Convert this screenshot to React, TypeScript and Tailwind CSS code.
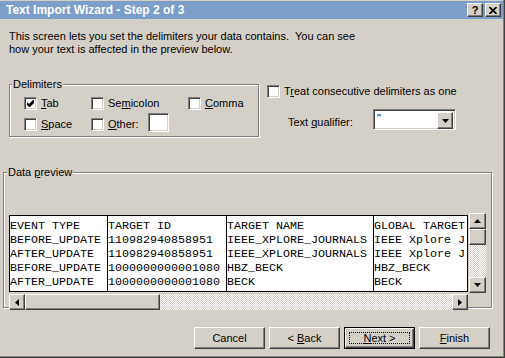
import React from "react";

const ui = "font-['Liberation_Sans',Arial,sans-serif] text-[11px] leading-[13px] text-black";
const raised =
  "border border-t-white border-l-white border-r-[#404040] border-b-[#404040] shadow-[inset_-1px_-1px_0_#808080] bg-[#d4d0c8]";
const sunken =
  "border border-t-[#808080] border-l-[#808080] border-r-white border-b-white shadow-[inset_1px_1px_0_#404040,inset_-1px_-1px_0_#d4d0c8] bg-white";
const etched = "border border-[#808080] shadow-[inset_1px_1px_0_#fff,1px_1px_0_#fff]";
const track =
  "bg-[repeating-conic-gradient(#d4d0c8_0_25%,#ffffff_0_50%)] bg-[length:2px_2px]";

const rows = [
  ["EVENT TYPE", "TARGET ID", "TARGET NAME", "GLOBAL TARGET"],
  ["BEFORE_UPDATE", "110982940858951", "IEEE_XPLORE_JOURNALS", "IEEE Xplore J"],
  ["AFTER_UPDATE", "110982940858951", "IEEE_XPLORE_JOURNALS", "IEEE Xplore J"],
  ["BEFORE_UPDATE", "1000000000001080", "HBZ_BECK", "HBZ_BECK"],
  ["AFTER_UPDATE", "1000000000001080", "BECK", "BECK"],
];

function Check({ checked }: { checked?: boolean }) {
  return (
    <span className={`${sunken} flex h-[13px] w-[13px] shrink-0 items-center justify-center`}>
      {checked && (
        <svg width="7" height="7" viewBox="0 0 7 7">
          <polygon points="0,2 2,4 6,0 7,0 7,3 3,7 2,7 0,5" fill="#000" />
        </svg>
      )}
    </span>
  );
}

function Option({ checked, children }: { checked?: boolean; children: React.ReactNode }) {
  return (
    <div className="flex items-center gap-[4px]">
      <Check checked={checked} />
      <span>{children}</span>
    </div>
  );
}

function Arrow({ dir }: { dir: "up" | "down" | "left" | "right" }) {
  const pts = {
    up: "0,4 7,4 3.5,0",
    down: "0,0 7,0 3.5,4",
    left: "4,0 4,7 0,3.5",
    right: "0,0 0,7 4,3.5",
  }[dir];
  const vertical = dir === "up" || dir === "down";
  return (
    <svg width={vertical ? 7 : 4} height={vertical ? 4 : 7} viewBox={vertical ? "0 0 7 4" : "0 0 4 7"}>
      <polygon points={pts} fill="#000" />
    </svg>
  );
}

function Button({ children, isDefault }: { children: React.ReactNode; isDefault?: boolean }) {
  if (isDefault) {
    return (
      <div className="h-[22px] w-[71px] border border-black">
        <div className={`${raised} flex h-full w-full p-[3px]`}>
          <div className="flex flex-1 items-center justify-center border border-dotted border-black">
            <span className="whitespace-pre">{children}</span>
          </div>
        </div>
      </div>
    );
  }
  return (
    <div className={`${raised} flex h-[22px] w-[71px] items-center justify-center`}>
      <span className="whitespace-pre">{children}</span>
    </div>
  );
}

export default function App() {
  return (
    <div className={`${ui} h-[358px] w-[505px] border-r border-b border-[#404040] bg-[#d4d0c8]`}>
      <div className="flex h-full w-full flex-col border-r border-b border-[#808080] pt-[1px]">
        {/* Title bar */}
        <div className="flex h-[18px] items-center justify-between bg-[#7b9ecb] pl-[6px] pr-[2px]">
          <span className="text-[12px] font-bold text-white">Text Import Wizard - Step 2 of 3</span>
          <div className="flex gap-[2px]">
            <div className={`${raised} flex h-[14px] w-[16px] items-center justify-center text-[11px] font-bold leading-none`}>
              ?
            </div>
            <div className={`${raised} flex h-[14px] w-[16px] items-center justify-center`}>
              <svg width="8" height="7" viewBox="0 0 8 7">
                <path d="M0.5 0 L7.5 7 M7.5 0 L0.5 7" stroke="#000" strokeWidth="1.6" />
              </svg>
            </div>
          </div>
        </div>

        <p className="mt-[11px] whitespace-pre pl-[9px]">
          {"This screen lets you set the delimiters your data contains.  You can see\nhow your text is affected in the preview below."}
        </p>

        {/* Options */}
        <div className="mt-[28px] flex items-start">
          <div className={`${etched} relative ml-[9px] h-[53px] w-[250px] pl-[14px] pt-[8px]`}>
            <span className="absolute -top-[7px] left-[2px] bg-[#d4d0c8] px-[1px]">Delimiters</span>
            <div className="grid grid-cols-[67px_97px_auto]">
              <div className="flex h-[21px] items-center">
                <Option checked>
                  <u>T</u>ab
                </Option>
              </div>
              <div className="flex h-[21px] items-center">
                <Option>
                  Se<u>m</u>icolon
                </Option>
              </div>
              <div className="flex h-[21px] items-center">
                <Option>
                  <u>C</u>omma
                </Option>
              </div>
              <div className="flex h-[21px] items-center">
                <Option>
                  <u>S</u>pace
                </Option>
              </div>
              <div className="col-span-2 flex h-[21px] items-center">
                <Option>
                  <u>O</u>ther:
                </Option>
                <div className={`${sunken} mb-[4px] ml-[9px] h-[19px] w-[21px]`} />
              </div>
            </div>
          </div>

          <div className="ml-[8px] flex flex-col pt-[1px]">
            <div className="flex h-[13px] items-center gap-[4px]">
              <Check />
              <span>
                T<u>r</u>eat consecutive delimiters as one
              </span>
            </div>
            <div className="mt-[11px] flex items-start">
              <span className="ml-[21px] mt-[7px] w-[85px]">
                Text <u>q</u>ualifier:
              </span>
              <div className={`${sunken} flex h-[21px] w-[83px] p-[2px]`}>
                <span className="flex-1 pl-[1px] leading-[12px]">"</span>
                <div className={`${raised} flex h-[17px] w-[16px] items-center justify-center`}>
                  <Arrow dir="down" />
                </div>
              </div>
            </div>
          </div>
        </div>

        {/* Data preview */}
        <div className={`${etched} relative ml-[3px] mt-[35px] h-[136px] w-[489px]`}>
          <span className="absolute -top-[7px] left-[3px] bg-[#d4d0c8] px-[1px]">
            Data <u>p</u>review
          </span>
          <div className="ml-[5px] mt-[40px] flex">
            <div className="flex w-[459px] flex-col">
              <div className="mt-[2px] flex h-[77px] overflow-hidden border border-black bg-white pt-[3px] font-['Liberation_Mono','Courier_New',monospace] text-[11.67px] leading-[14px]">
                {[97, 118, 146, 93].map((w, c) => (
                  <div
                    key={c}
                    className={`-mt-[3px] shrink-0 overflow-hidden whitespace-pre pt-[3px] ${c < 3 ? "border-r border-black" : ""}`}
                    style={{ width: c < 3 ? w + 1 : w }}
                  >
                    {rows.map((r, i) => (
                      <div key={i}>{r[c]}</div>
                    ))}
                  </div>
                ))}
              </div>
              <div className="mt-[2px] flex h-[16px]">
                <div className={`${raised} flex h-[16px] w-[16px] items-center justify-center`}>
                  <Arrow dir="left" />
                </div>
                <div className={`${raised} h-[16px] w-[135px]`} />
                <div className={`${track} flex-1`} />
                <div className={`${raised} flex h-[16px] w-[16px] items-center justify-center`}>
                  <Arrow dir="right" />
                </div>
              </div>
            </div>
            <div className="ml-[1px] flex h-[80px] w-[17px] flex-col">
              <div className={`${raised} flex h-[16px] items-center justify-center`}>
                <Arrow dir="up" />
              </div>
              <div className={`${raised} h-[16px]`} />
              <div className={`${track} flex-1`} />
              <div className={`${raised} flex h-[16px] items-center justify-center`}>
                <Arrow dir="down" />
              </div>
            </div>
          </div>
        </div>

        {/* Buttons */}
        <div className="mt-[19px] flex justify-end gap-[4px] pr-[13px]">
          <Button>Cancel</Button>
          <Button>
            {"< "}
            <u>B</u>ack
          </Button>
          <Button isDefault>
            <u>N</u>
            {"ext >"}
          </Button>
          <Button>
            <u>F</u>inish
          </Button>
        </div>
      </div>
    </div>
  );
}
